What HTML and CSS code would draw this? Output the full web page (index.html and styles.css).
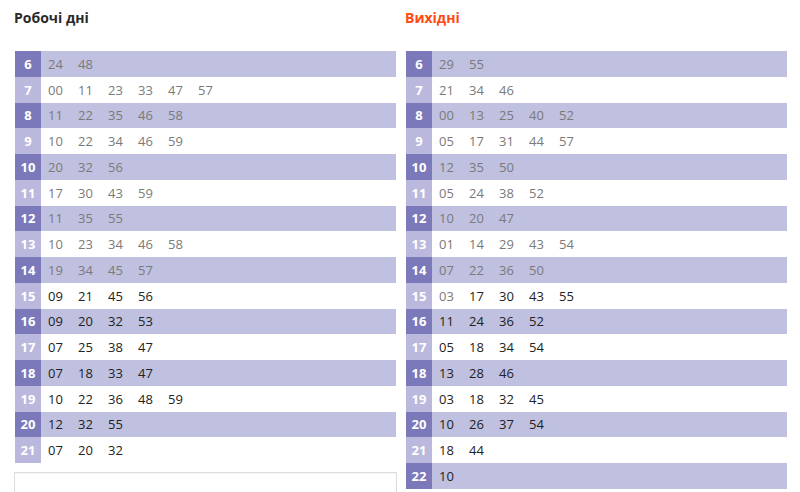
FILE: index.html
```html
<!DOCTYPE html>
<html lang="uk">
<head>
<meta charset="utf-8">
<link rel="stylesheet" href="styles.css">
</head>
<body>
<div class="page">
  <section class="col">
    <h2 class="title">Робочі дні</h2>
    <div class="table">
      <div class="row"><span class="h">6</span><span class="m past">24</span><span class="m past">48</span></div>
      <div class="row"><span class="h">7</span><span class="m past">00</span><span class="m past">11</span><span class="m past">23</span><span class="m past">33</span><span class="m past">47</span><span class="m past">57</span></div>
      <div class="row"><span class="h">8</span><span class="m past">11</span><span class="m past">22</span><span class="m past">35</span><span class="m past">46</span><span class="m past">58</span></div>
      <div class="row"><span class="h">9</span><span class="m past">10</span><span class="m past">22</span><span class="m past">34</span><span class="m past">46</span><span class="m past">59</span></div>
      <div class="row"><span class="h">10</span><span class="m past">20</span><span class="m past">32</span><span class="m past">56</span></div>
      <div class="row"><span class="h">11</span><span class="m past">17</span><span class="m past">30</span><span class="m past">43</span><span class="m past">59</span></div>
      <div class="row"><span class="h">12</span><span class="m past">11</span><span class="m past">35</span><span class="m past">55</span></div>
      <div class="row"><span class="h">13</span><span class="m past">10</span><span class="m past">23</span><span class="m past">34</span><span class="m past">46</span><span class="m past">58</span></div>
      <div class="row"><span class="h">14</span><span class="m past">19</span><span class="m past">34</span><span class="m past">45</span><span class="m past">57</span></div>
      <div class="row"><span class="h">15</span><span class="m">09</span><span class="m">21</span><span class="m">45</span><span class="m">56</span></div>
      <div class="row"><span class="h">16</span><span class="m">09</span><span class="m">20</span><span class="m">32</span><span class="m">53</span></div>
      <div class="row"><span class="h">17</span><span class="m">07</span><span class="m">25</span><span class="m">38</span><span class="m">47</span></div>
      <div class="row"><span class="h">18</span><span class="m">07</span><span class="m">18</span><span class="m">33</span><span class="m">47</span></div>
      <div class="row"><span class="h">19</span><span class="m">10</span><span class="m">22</span><span class="m">36</span><span class="m">48</span><span class="m">59</span></div>
      <div class="row"><span class="h">20</span><span class="m">12</span><span class="m">32</span><span class="m">55</span></div>
      <div class="row"><span class="h">21</span><span class="m">07</span><span class="m">20</span><span class="m">32</span></div>
    </div>
    <div class="box"></div>
  </section>
  <section class="col">
    <h2 class="title weekend">Вихідні</h2>
    <div class="table">
      <div class="row"><span class="h">6</span><span class="m past">29</span><span class="m past">55</span></div>
      <div class="row"><span class="h">7</span><span class="m past">21</span><span class="m past">34</span><span class="m past">46</span></div>
      <div class="row"><span class="h">8</span><span class="m past">00</span><span class="m past">13</span><span class="m past">25</span><span class="m past">40</span><span class="m past">52</span></div>
      <div class="row"><span class="h">9</span><span class="m past">05</span><span class="m past">17</span><span class="m past">31</span><span class="m past">44</span><span class="m past">57</span></div>
      <div class="row"><span class="h">10</span><span class="m past">12</span><span class="m past">35</span><span class="m past">50</span></div>
      <div class="row"><span class="h">11</span><span class="m past">05</span><span class="m past">24</span><span class="m past">38</span><span class="m past">52</span></div>
      <div class="row"><span class="h">12</span><span class="m past">10</span><span class="m past">20</span><span class="m past">47</span></div>
      <div class="row"><span class="h">13</span><span class="m past">01</span><span class="m past">14</span><span class="m past">29</span><span class="m past">43</span><span class="m past">54</span></div>
      <div class="row"><span class="h">14</span><span class="m past">07</span><span class="m past">22</span><span class="m past">36</span><span class="m past">50</span></div>
      <div class="row"><span class="h">15</span><span class="m past">03</span><span class="m">17</span><span class="m">30</span><span class="m">43</span><span class="m">55</span></div>
      <div class="row"><span class="h">16</span><span class="m">11</span><span class="m">24</span><span class="m">36</span><span class="m">52</span></div>
      <div class="row"><span class="h">17</span><span class="m">05</span><span class="m">18</span><span class="m">34</span><span class="m">54</span></div>
      <div class="row"><span class="h">18</span><span class="m">13</span><span class="m">28</span><span class="m">46</span></div>
      <div class="row"><span class="h">19</span><span class="m">03</span><span class="m">18</span><span class="m">32</span><span class="m">45</span></div>
      <div class="row"><span class="h">20</span><span class="m">10</span><span class="m">26</span><span class="m">37</span><span class="m">54</span></div>
      <div class="row"><span class="h">21</span><span class="m">18</span><span class="m">44</span></div>
      <div class="row"><span class="h">22</span><span class="m">10</span></div>
    </div>
  </section>
</div>
</body>
</html>
```

FILE: styles.css
```css
html, body {
  margin: 0;
  padding: 0;
  background: #ffffff;
  overflow: hidden;
}

body {
  font-family: "Open Sans", "Noto Sans", sans-serif;
  color: #222222;
}

.page {
  display: flex;
  gap: 10px;
  padding: 0 13px 0 15px;
}

.col {
  flex: 1 1 0;
  min-width: 0;
}

.title {
  margin: 0 0 0 -1px;
  padding: 8px 0 0 0;
  height: 51px;
  box-sizing: border-box;
  font-size: 14px;
  line-height: 20px;
  font-weight: 700;
  color: #2a2a2a;
}

.title.weekend {
  color: #ff4a14;
}

.table {
  display: flex;
  flex-direction: column;
}

.row {
  display: flex;
  align-items: center;
  height: 25.76px;
  background: #ffffff;
}

.row:nth-child(odd) {
  background: #c0c0e0;
}

.h {
  flex: 0 0 26px;
  align-self: stretch;
  display: flex;
  align-items: center;
  justify-content: center;
  font-size: 13px;
  font-weight: 700;
  color: #ffffff;
  background: #bab8dd;
  margin-right: 7px;
}

.row:nth-child(odd) .h {
  background: #7c79bb;
}

.m {
  width: 30px;
  font-size: 13px;
  line-height: 18px;
  color: #222222;
}

.m.past {
  color: #7a7a7a;
}

.box {
  margin: 9px -1px 0 -1px;
  height: 40px;
  border: 1px solid #dddddd;
  box-shadow: inset 0 1px 1px rgba(0, 0, 0, 0.04);
}
```
